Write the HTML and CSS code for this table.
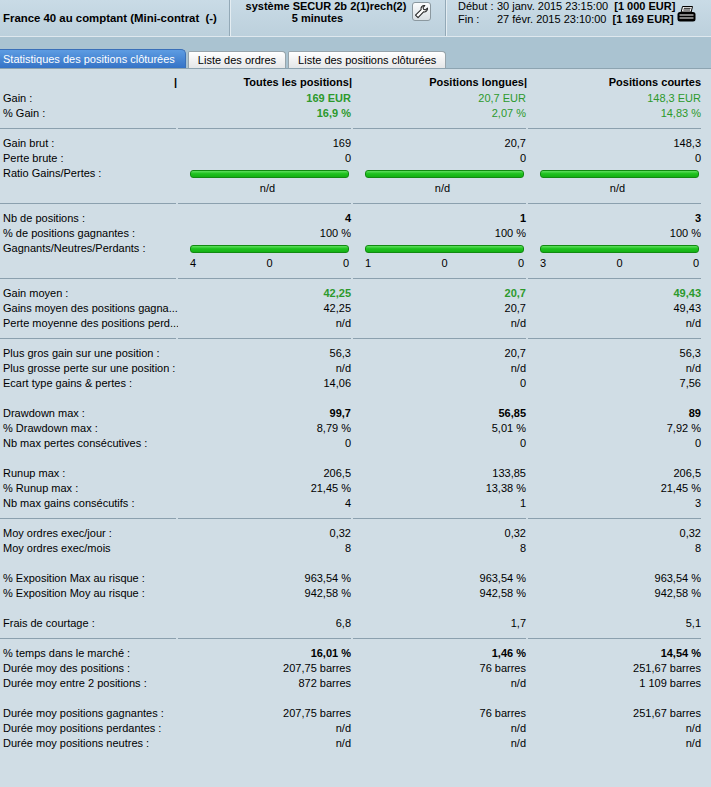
FILE: index.html
```html
<!DOCTYPE html>
<html lang="fr">
<head>
<meta charset="utf-8">
<title>Statistiques</title>
<link rel="stylesheet" href="styles.css">
</head>
<body>
<div class="topbar">
  <div class="cell c1"><span class="title">France 40 au comptant (Mini-contrat&nbsp; (-)</span></div>
  <div class="cell c2">
    <div class="sys"><div class="l1">système SECUR 2b 2(1)rech(2)</div><div class="l2">5 minutes</div></div>
    <button class="wrench" type="button" aria-label="Paramètres">
      <svg width="15" height="15" viewBox="0 0 16 16"><path d="M4.3 14.6 L1.6 11.9 L7.6 5.9 C7 3.6 8.7 1.3 11.6 1.6 L9.6 3.8 L10.2 5.7 L12.2 6.3 L14.4 4.3 C14.7 7.2 12.4 8.9 10.2 8.4 Z" fill="#fff" stroke="#222" stroke-width="1.1" stroke-linejoin="round"/></svg>
    </button>
  </div>
  <div class="cell c3">
    <div class="dates">
      <span class="dl">Début :</span><span>30 janv. 2015 23:15:00&nbsp; <b>[1 000 EUR]</b></span>
      <span class="dl">Fin :</span><span>27 févr. 2015 23:10:00&nbsp; <b>[1 169 EUR]</b></span>
    </div>
    <svg class="printer" width="19" height="16" viewBox="0 0 19 16">
      <path d="M5.5 0.5 H15.5 L14.2 6 H4.2 Z" fill="#fff" stroke="#000" stroke-width="1"/>
      <path d="M6.8 2.3 H13.6 M6.3 4 H13.2" stroke="#000" stroke-width="0.9"/>
      <rect x="0.5" y="6" width="18" height="9.5" rx="2.5" fill="#000"/>
      <path d="M2.5 9 H16.5 M2.5 12 H16.5" stroke="#fff" stroke-width="1"/>
    </svg>
  </div>
</div>
<div class="tabstrip">
  <div class="tab active">Statistiques des positions clôturées</div>
  <div class="tab">Liste des ordres</div>
  <div class="tab">Liste des positions clôturées</div>
</div>
<div class="content">
  <div class="row head"><div class="lbl pipe">|</div><div class="v">Toutes les positions|</div><div class="v">Positions longues|</div><div class="v pr">Positions courtes</div></div>

  <div class="row"><div class="lbl">Gain :</div><div class="v b g">169 EUR</div><div class="v g">20,7 EUR</div><div class="v g">148,3 EUR</div></div>
  <div class="row"><div class="lbl">% Gain :</div><div class="v b g">16,9 %</div><div class="v g">2,07 %</div><div class="v g">14,83 %</div></div>
  <div class="row sep"><i></i><i></i><i></i><i></i></div>

  <div class="row"><div class="lbl">Gain brut :</div><div class="v">169</div><div class="v">20,7</div><div class="v">148,3</div></div>
  <div class="row"><div class="lbl">Perte brute :</div><div class="v">0</div><div class="v">0</div><div class="v">0</div></div>
  <div class="row"><div class="lbl">Ratio Gains/Pertes :</div><div class="bar"></div><div class="bar"></div><div class="bar"></div></div>
  <div class="row"><div class="lbl"></div><div class="v c">n/d</div><div class="v c">n/d</div><div class="v c">n/d</div></div>
  <div class="row sep"><i></i><i></i><i></i><i></i></div>

  <div class="row"><div class="lbl">Nb de positions :</div><div class="v b">4</div><div class="v b">1</div><div class="v b">3</div></div>
  <div class="row"><div class="lbl">% de positions gagnantes :</div><div class="v">100 %</div><div class="v">100 %</div><div class="v">100 %</div></div>
  <div class="row"><div class="lbl">Gagnants/Neutres/Perdants :</div><div class="bar"></div><div class="bar"></div><div class="bar"></div></div>
  <div class="row"><div class="lbl"></div><div class="nums"><span>4</span><span>0</span><span>0</span></div><div class="nums"><span>1</span><span>0</span><span>0</span></div><div class="nums"><span>3</span><span>0</span><span>0</span></div></div>
  <div class="row sep"><i></i><i></i><i></i><i></i></div>

  <div class="row"><div class="lbl">Gain moyen :</div><div class="v b g">42,25</div><div class="v b g">20,7</div><div class="v b g">49,43</div></div>
  <div class="row"><div class="lbl">Gains moyen des positions gagna...</div><div class="v">42,25</div><div class="v">20,7</div><div class="v">49,43</div></div>
  <div class="row"><div class="lbl">Perte moyenne des positions perd...</div><div class="v">n/d</div><div class="v">n/d</div><div class="v">n/d</div></div>
  <div class="row sep"><i></i><i></i><i></i><i></i></div>

  <div class="row"><div class="lbl">Plus gros gain sur une position :</div><div class="v">56,3</div><div class="v">20,7</div><div class="v">56,3</div></div>
  <div class="row"><div class="lbl">Plus grosse perte sur une position :</div><div class="v">n/d</div><div class="v">n/d</div><div class="v">n/d</div></div>
  <div class="row"><div class="lbl">Ecart type gains &amp; pertes :</div><div class="v">14,06</div><div class="v">0</div><div class="v">7,56</div></div>
  <div class="row blank"></div>

  <div class="row"><div class="lbl">Drawdown max :</div><div class="v b">99,7</div><div class="v b">56,85</div><div class="v b">89</div></div>
  <div class="row"><div class="lbl">% Drawdown max :</div><div class="v">8,79 %</div><div class="v">5,01 %</div><div class="v">7,92 %</div></div>
  <div class="row"><div class="lbl">Nb max pertes consécutives :</div><div class="v">0</div><div class="v">0</div><div class="v">0</div></div>
  <div class="row blank"></div>

  <div class="row"><div class="lbl">Runup max :</div><div class="v">206,5</div><div class="v">133,85</div><div class="v">206,5</div></div>
  <div class="row"><div class="lbl">% Runup max :</div><div class="v">21,45 %</div><div class="v">13,38 %</div><div class="v">21,45 %</div></div>
  <div class="row"><div class="lbl">Nb max gains consécutifs :</div><div class="v">4</div><div class="v">1</div><div class="v">3</div></div>
  <div class="row sep"><i></i><i></i><i></i><i></i></div>

  <div class="row"><div class="lbl">Moy ordres exec/jour :</div><div class="v">0,32</div><div class="v">0,32</div><div class="v">0,32</div></div>
  <div class="row"><div class="lbl">Moy ordres exec/mois</div><div class="v">8</div><div class="v">8</div><div class="v">8</div></div>
  <div class="row blank"></div>

  <div class="row"><div class="lbl">% Exposition Max au risque :</div><div class="v">963,54 %</div><div class="v">963,54 %</div><div class="v">963,54 %</div></div>
  <div class="row"><div class="lbl">% Exposition Moy au risque :</div><div class="v">942,58 %</div><div class="v">942,58 %</div><div class="v">942,58 %</div></div>
  <div class="row blank"></div>

  <div class="row"><div class="lbl">Frais de courtage :</div><div class="v">6,8</div><div class="v">1,7</div><div class="v">5,1</div></div>
  <div class="row sep"><i></i><i></i><i></i><i></i></div>

  <div class="row"><div class="lbl">% temps dans le marché :</div><div class="v b">16,01 %</div><div class="v b">1,46 %</div><div class="v b">14,54 %</div></div>
  <div class="row"><div class="lbl">Durée moy des positions :</div><div class="v">207,75 barres</div><div class="v">76 barres</div><div class="v">251,67 barres</div></div>
  <div class="row"><div class="lbl">Durée moy entre 2 positions :</div><div class="v">872 barres</div><div class="v">n/d</div><div class="v">1 109 barres</div></div>
  <div class="row blank"></div>

  <div class="row"><div class="lbl">Durée moy positions gagnantes :</div><div class="v">207,75 barres</div><div class="v">76 barres</div><div class="v">251,67 barres</div></div>
  <div class="row"><div class="lbl">Durée moy positions perdantes :</div><div class="v">n/d</div><div class="v">n/d</div><div class="v">n/d</div></div>
  <div class="row"><div class="lbl">Durée moy positions neutres :</div><div class="v">n/d</div><div class="v">n/d</div><div class="v">n/d</div></div>
</div>
</body>
</html>
```

FILE: styles.css
```css
* { box-sizing: border-box; }
html, body { margin: 0; padding: 0; }
body {
  background: #d0dde5;
  font-family: "Liberation Sans", Arial, sans-serif;
  font-size: 11px;
  color: #000;
  width: 711px;
  min-height: 787px;
}

/* ---------- top bar ---------- */
.topbar {
  display: flex;
  height: 37px;
  background: linear-gradient(#c9dbe6, #bcd0dc);
  border-bottom: 1px solid #dfe8ee;
}
.cell { height: 36px; }
.c1 {
  width: 229px;
  padding-left: 3px;
  display: flex;
  align-items: center;
}
.title { font-weight: bold; font-size: 11.4px; }
.c2 {
  width: 216px;
  border-left: 1px solid #93a9b7;
  box-shadow: inset 1px 0 #e4edf2;
  display: flex;
  align-items: flex-start;
}
.sys {
  width: 181px;
  text-align: center;
  font-weight: bold;
  line-height: 12px;
}
.sys .l1 { padding-left: 11px; }
.sys .l2 { padding-right: 6px; }
.wrench {
  margin: 2px 0 0 1px;
  width: 19px;
  height: 19px;
  padding: 0;
  border: 1px solid #8b989f;
  border-radius: 3px;
  background: linear-gradient(#fbfcfd, #d9dfe3);
  display: flex;
  align-items: center;
  justify-content: center;
}
.c3 {
  flex: 1;
  border-left: 1px solid #93a9b7;
  box-shadow: inset 1px 0 #e4edf2;
  display: flex;
  align-items: flex-start;
  padding: 0 15px 0 12px;
}
.dates {
  display: grid;
  grid-template-columns: 39px auto;
  line-height: 13px;
  padding-top: 0;
}
.printer { margin: 6px 0 0 auto; }

/* ---------- tabs ---------- */
.tabstrip {
  height: 32px;
  background: #aac3d1;
  display: flex;
  align-items: flex-end;
  gap: 2px;
  border-bottom: 1px solid #8da4b1;
}
.tab {
  height: 17px;
  line-height: 16px;
  padding: 0 9px;
  background: linear-gradient(#ffffff, #e4e6e8);
  border: 1px solid #97a4ab;
  border-bottom: none;
  border-radius: 2px 4px 0 0;
}
.tab.active {
  height: 19px;
  line-height: 18px;
  padding: 0 10px 0 3px;
  color: #fff;
  background: linear-gradient(#5d9ce2, #3573c6);
  border-color: #3a6fb8;
  border-left: none;
  border-radius: 0 5px 0 0;
}

/* ---------- stats table ---------- */
.content { padding-top: 5px; }
.row {
  display: grid;
  grid-template-columns: 178px 175px 175px 175px;
  height: 15px;
  line-height: 15px;
  align-items: center;
}
.row.head { height: 17px; line-height: 17px; font-weight: bold; }
.lbl { padding-left: 3px; white-space: nowrap; overflow: hidden; }
.lbl.pipe { text-align: right; padding-right: 1px; }
.v { text-align: right; padding-right: 2px; white-space: nowrap; }
.head .v { padding-right: 1px; }
.head .v.pr { padding-right: 2px; }
.v.c { text-align: center; padding: 0 8px 0 12px; }
.b { font-weight: bold; }
.g { color: #2c992c; }

.sep i {
  display: block;
  height: 1px;
  background: #8ba0ae;
  margin-right: 2px;
}

.bar {
  height: 8px;
  margin: 0 4px 0 12px;
  border: 1px solid #118a11;
  border-radius: 3px;
  background: linear-gradient(#5fe05f, #1fc21f 45%, #14b014);
}
.nums {
  display: flex;
  justify-content: space-between;
  padding: 0 4px 0 12px;
}
```
